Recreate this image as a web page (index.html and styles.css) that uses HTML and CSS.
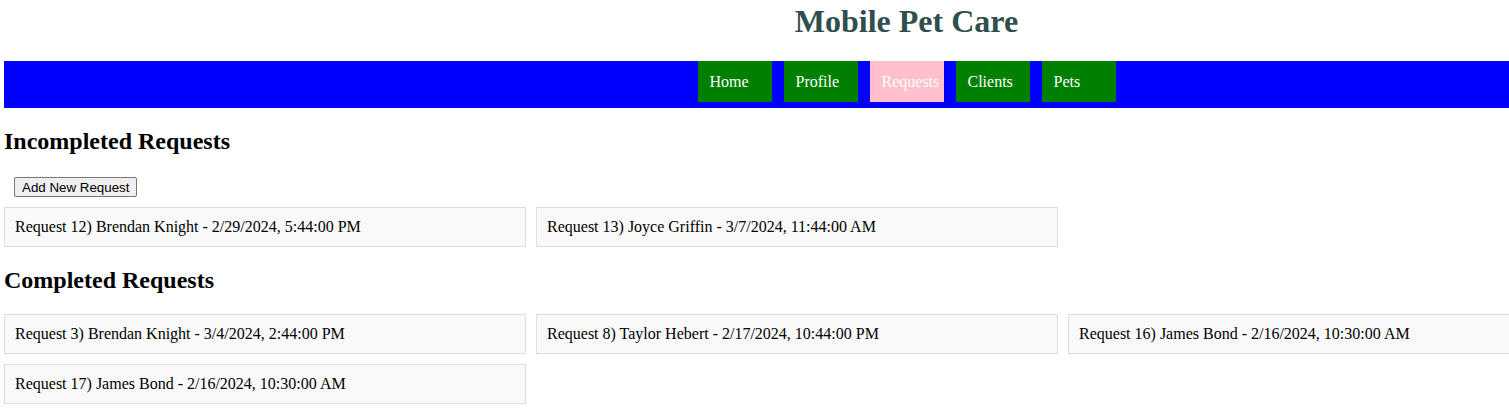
FILE: index.html
```html
<!DOCTYPE html>
<html lang="en">
<head>
<meta charset="utf-8">
<title>Mobile Pet Care</title>
<link rel="stylesheet" href="styles.css">
</head>
<body>
<div class="page">
  <h1 class="title">Mobile Pet Care</h1>
  <nav class="nav">
    <a class="nav-item" href="#">Home</a>
    <a class="nav-item" href="#">Profile</a>
    <a class="nav-item active" href="#">Requests</a>
    <a class="nav-item" href="#">Clients</a>
    <a class="nav-item" href="#">Pets</a>
  </nav>
  <h2 class="section-title">Incompleted Requests</h2>
  <button class="add-btn" type="button">Add New Request</button>
  <div class="cards">
    <div class="card">Request 12) Brendan Knight - 2/29/2024, 5:44:00 PM</div>
    <div class="card">Request 13) Joyce Griffin - 3/7/2024, 11:44:00 AM</div>
  </div>
  <h2 class="section-title">Completed Requests</h2>
  <div class="cards">
    <div class="card">Request 3) Brendan Knight - 3/4/2024, 2:44:00 PM</div>
    <div class="card">Request 8) Taylor Hebert - 2/17/2024, 10:44:00 PM</div>
    <div class="card">Request 16) James Bond - 2/16/2024, 10:30:00 AM</div>
    <div class="card">Request 17) James Bond - 2/16/2024, 10:30:00 AM</div>
  </div>
</div>
</body>
</html>
```
FILE: styles.css
```css
html, body {
  overflow-x: hidden;
}
body {
  margin: 0;
  padding: 0 0 0 4px;
  font-family: "Liberation Serif", "Times New Roman", serif;
  font-size: 16px;
  color: #000;
  background: #fff;
}
.page {
  width: 1805px;
}
.title {
  margin: 3px 0 0;
  font-size: 32px;
  font-weight: bold;
  color: #2f4f4f;
  text-align: center;
  line-height: 37px;
}
.nav {
  margin-top: 21px;
  background: #0000ff;
  height: 47px;
  display: flex;
  justify-content: center;
  align-items: flex-start;
  gap: 12px;
}
.nav-item {
  display: block;
  width: 50px;
  height: 41px;
  line-height: 41px;
  padding: 0 12px;
  background: #008000;
  color: #fff;
  text-decoration: none;
  font-size: 16px;
  white-space: nowrap;
}
.nav-item.active {
  background: #ffc0cb;
}
.section-title {
  margin: 20px 0;
  font-size: 24px;
  font-weight: bold;
  line-height: 27px;
}
.add-btn {
  display: block;
  margin: 22px 0 10px 10px;
  height: 20px;
  padding: 0 7px;
  font-family: "Liberation Sans", Arial, sans-serif;
  font-size: 13.333px;
  color: #000;
  background: #efefef;
  border: 1px solid #767676;
  border-radius: 2px;
}
.cards {
  display: flex;
  flex-wrap: wrap;
  gap: 10px;
}
.card {
  box-sizing: border-box;
  width: 522px;
  height: 40px;
  padding: 10px;
  line-height: 18px;
  background: #f9f9f9;
  border: 1px solid #dddddd;
  white-space: nowrap;
}
```
